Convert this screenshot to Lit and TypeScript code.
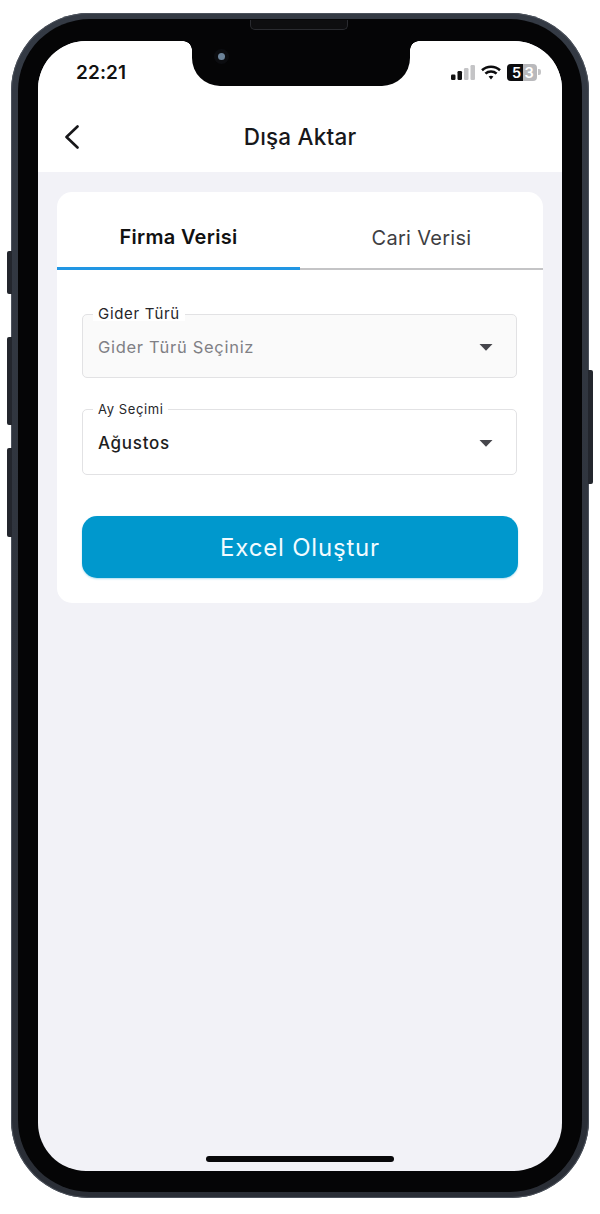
import { LitElement, html, css } from "lit";
import { customElement } from "lit/decorators.js";

const caret = html`<svg class="caret" width="14" height="7" viewBox="0 0 14 7"><path d="M0.5 0H13.5L7 6.8Z" fill="#46464c"/></svg>`;

@customElement("app-root")
export class AppRoot extends LitElement {
  static styles = css`
    :host { display: block; width: 600px; height: 1214px; background: #fff; overflow: hidden; font-family: Inter, "Liberation Sans", sans-serif; }
    * { box-sizing: border-box; }
    .device { position: relative; width: 578px; height: 1185px; margin: 13px 0 0 11px; padding: 6px 7px; border-radius: 78px;
      background: linear-gradient(#343a44, #2a2e36); box-shadow: inset 0 0 0 1px #4c525c; }
    .side { position: absolute; width: 5px; background: #23262d; }
    .side.l { left: -4px; border-radius: 2px 0 0 2px; }
    .side.r { right: -4px; border-radius: 0 2px 2px 0; }
    .s1 { top: 238px; height: 43px; } .s2 { top: 324px; height: 88px; } .s3 { top: 435px; height: 89px; } .s4 { top: 357px; height: 114px; }
    .bezel { position: relative; height: 100%; padding: 22px 20px 21px; border-radius: 72px; background: #050506; }
    .speaker { position: absolute; top: 1px; left: 232px; width: 98px; height: 10px; border-radius: 0 0 5px 5px; background: #0e0e10; border: 1px solid #2a2b30; border-top: 0; }
    .screen { position: relative; height: 100%; border-radius: 48px; overflow: hidden; background: #f2f2f7; }
    .notch { position: absolute; top: 0; left: 154px; width: 218px; height: 45px; background: #050506; border-radius: 0 0 28px 28px; }
    .notch::before, .notch::after { content: ""; position: absolute; top: 0; width: 9px; height: 9px; background: radial-gradient(circle at 0 100%, transparent 8.5px, #050506 9px); }
    .notch::before { left: -9px; }
    .notch::after { right: -9px; transform: scaleX(-1); }
    .lens { position: absolute; left: 26px; top: 12px; width: 7px; height: 7px; border-radius: 50%; background: #6c8399; box-shadow: 0 0 0 4px #0c0d10; }
    .top { background: #fff; height: 131px; }
    .status { display: flex; align-items: center; justify-content: space-between; height: 62px; padding: 0 21px 0 38px; }
    .time { font-size: 19px; font-weight: 600; color: #111; letter-spacing: .1px; }
    .icons { display: flex; align-items: center; gap: 6px; }
    .battery { display: flex; align-items: center; height: 17px; width: 30px; border-radius: 4px; background: #b9b9bc; overflow: hidden; font-size: 14.5px; font-weight: 600; color: #fff; }
    .battery b { font-weight: 600; width: 16px; height: 100%; background: #0c0c0e; display: flex; align-items: center; justify-content: center; padding-left: 3px; }
    .battery span { flex: 1; text-align: center; padding-right: 2px; }
    .nub { width: 3px; height: 6px; margin-left: -5px; border-radius: 0 2px 2px 0; background: #c4c4c6; }
    .nav { position: relative; display: flex; align-items: center; justify-content: center; height: 67px; font-size: 22.5px; font-weight: 500; letter-spacing: .2px; color: #17171a; }
    .back { position: absolute; left: 26px; top: 22px; }
    .body { padding: 20px 19px 0; }
    .card { background: #fff; border-radius: 15px; height: 411px; }
    .tabs { display: flex; height: 78px; border-bottom: 2px solid #c4c4c6; font-size: 20px; letter-spacing: .3px; }
    .tab { flex: 1; display: flex; align-items: center; justify-content: center; margin-bottom: -2px; padding-top: 14px; color: #3e3e42; }
    .tab.on { color: #111; font-weight: 600; border-bottom: 3px solid #2196e3; letter-spacing: .3px; padding-top: 15px; }
    .form { display: flex; flex-direction: column; padding: 44px 25px 0; }
    .field { position: relative; display: flex; align-items: center; justify-content: space-between; width: 435px; height: 66px; padding: 2px 23px 0 15px; border: 1.5px solid #e2e2e4; border-radius: 5px; font-size: 17px; letter-spacing: .7px; color: #1d1d20; font-weight: 500; }
    .field.off { background: #fafafa; color: #808085; font-size: 16.5px; font-weight: 400; height: 64px; margin-bottom: 31px; letter-spacing: .7px; }
    .legend { position: absolute; left: 10px; top: -9px; padding: 0 5px; background: #fff; font-size: 15px; font-weight: 400; line-height: 15px; letter-spacing: .7px; color: #26262a; }
    .legend.sm { font-size: 13px; letter-spacing: .6px; top: -8px; }
    .btn { margin-top: 41px; width: 436px; height: 62px; display: flex; align-items: center; justify-content: center; border-radius: 15px; background: #0098cd; color: #f2fbff; font-size: 24px; letter-spacing: .8px; box-shadow: 0 1px 2px #0098cd55; }
    .home { position: absolute; left: 168px; bottom: 9px; width: 188px; height: 6px; border-radius: 3px; background: #08080a; }
  `;

  render() {
    return html`
      <div class="device">
        <i class="side l s1"></i><i class="side l s2"></i><i class="side l s3"></i><i class="side r s4"></i>
        <div class="bezel">
          <div class="speaker"></div>
          <div class="screen">
            <div class="top">
              <div class="status">
                <span class="time">22:21</span>
                <div class="icons">
                  <svg width="24" height="15" viewBox="0 0 24 15">
                    <rect x="0" y="9.5" width="4.5" height="5.5" rx="1.2" fill="#111"/>
                    <rect x="6.5" y="6" width="4.5" height="9" rx="1.2" fill="#111"/>
                    <rect x="13" y="3" width="4.5" height="12" rx="1.2" fill="#c4c4c6"/>
                    <rect x="19.5" y="0" width="4.5" height="15" rx="1.2" fill="#c4c4c6"/>
                  </svg>
                  <svg width="20" height="15" viewBox="0 0 20 15" fill="none" stroke="#0c0c0e" stroke-width="2.6">
                    <path d="M1 5.2C6 .6 14 .6 19 5.2"/>
                    <path d="M4.4 8.6C7.5 5.8 12.5 5.8 15.6 8.6"/>
                    <path d="M7.6 11.6L10 14.6L12.4 11.6C11 10.4 9 10.4 7.6 11.6Z" fill="#0c0c0e" stroke="none"/>
                  </svg>
                  <div class="battery"><b>5</b><span>3</span></div>
                  <div class="nub"></div>
                </div>
              </div>
              <div class="nav">
                <svg class="back" width="16" height="24" viewBox="0 0 16 24" fill="none" stroke="#17171a" stroke-width="2.6" stroke-linecap="round" stroke-linejoin="round"><path d="M13.5 1.5L2.5 12L13.5 22.5"/></svg>
                Dışa Aktar
              </div>
            </div>
            <div class="body">
              <div class="card">
                <div class="tabs">
                  <div class="tab on">Firma Verisi</div>
                  <div class="tab">Cari Verisi</div>
                </div>
                <div class="form">
                  <div class="field off"><span class="legend">Gider Türü</span>Gider Türü Seçiniz${caret}</div>
                  <div class="field"><span class="legend sm">Ay Seçimi</span>Ağustos${caret}</div>
                  <div class="btn">Excel Oluştur</div>
                </div>
              </div>
            </div>
            <div class="notch"><i class="lens"></i></div>
            <div class="home"></div>
          </div>
        </div>
      </div>
    `;
  }
}
